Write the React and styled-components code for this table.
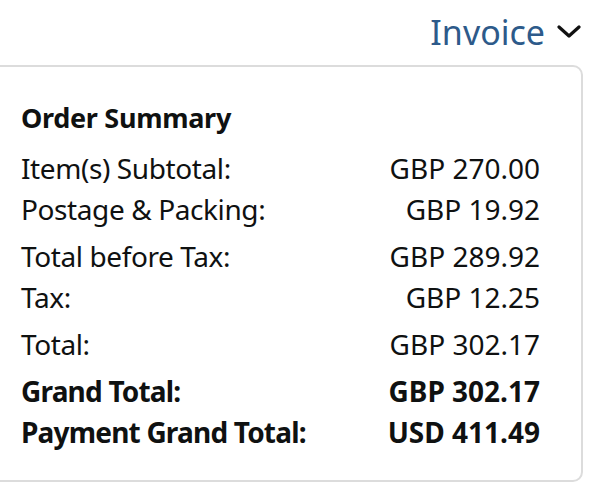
import React from 'react';
import styled, { createGlobalStyle } from 'styled-components';

const GlobalStyle = createGlobalStyle`
  body {
    margin: 0;
    background: #ffffff;
    overflow: hidden;
    font-family: "Noto Sans", "Open Sans", sans-serif;
    color: #0f1111;
  }
`;

const Page = styled.div`
  width: 591px;
  height: 482px;
  overflow: hidden;
`;

const Header = styled.div`
  display: flex;
  justify-content: flex-end;
  align-items: center;
  height: 65px;
  padding-right: 10px;
  box-sizing: border-box;
`;

const InvoiceLink = styled.a`
  display: flex;
  align-items: center;
  gap: 12px;
  margin-top: -2px;
  font-size: 34px;
  color: #2d5a8a;
  text-decoration: none;
  cursor: pointer;
`;

const Card = styled.div`
  margin-left: -20px;
  margin-right: 8px;
  border: 2px solid #dcdcdc;
  border-radius: 10px;
  padding: 33px 41px 24px 39px;
  height: 417px;
  box-sizing: border-box;
`;

const Heading = styled.div`
  font-size: 27px;
  font-weight: 700;
  line-height: 36px;
  letter-spacing: -0.3px;
  margin-bottom: 12px;
`;

const Group = styled.div`
  & + & {
    margin-top: 6px;
  }
`;

const Row = styled.div`
  display: flex;
  justify-content: space-between;
  font-size: 28px;
  line-height: 41px;
  font-weight: ${(p) => (p.$bold ? 700 : 400)};
`;

const Label = styled.span`
  letter-spacing: ${(p) => (p.$bold ? '-0.8px' : '-0.4px')};
`;

const Value = styled.span``;

const groups = [
  [
    ['Item(s) Subtotal:', 'GBP 270.00'],
    ['Postage & Packing:', 'GBP 19.92'],
  ],
  [
    ['Total before Tax:', 'GBP 289.92'],
    ['Tax:', 'GBP 12.25'],
  ],
  [['Total:', 'GBP 302.17']],
  [
    ['Grand Total:', 'GBP 302.17', true],
    ['Payment Grand Total:', 'USD 411.49', true],
  ],
];

const Chevron = () => (
  <svg width="24" height="14" viewBox="0 0 24 14">
    <path d="M2 2 L12 11 L22 2" fill="none" stroke="#111" strokeWidth="3.2" strokeLinecap="round" strokeLinejoin="round" />
  </svg>
);

const App = () => (
  <Page>
    <GlobalStyle />
    <Header>
      <InvoiceLink>
        Invoice
        <Chevron />
      </InvoiceLink>
    </Header>
    <Card>
      <Heading>Order Summary</Heading>
      {groups.map((g, i) => (
        <Group key={i}>
          {g.map(([label, value, bold]) => (
            <Row key={label} $bold={bold}>
              <Label $bold={bold}>{label}</Label>
              <Value>{value}</Value>
            </Row>
          ))}
        </Group>
      ))}
    </Card>
  </Page>
);

export default App;
